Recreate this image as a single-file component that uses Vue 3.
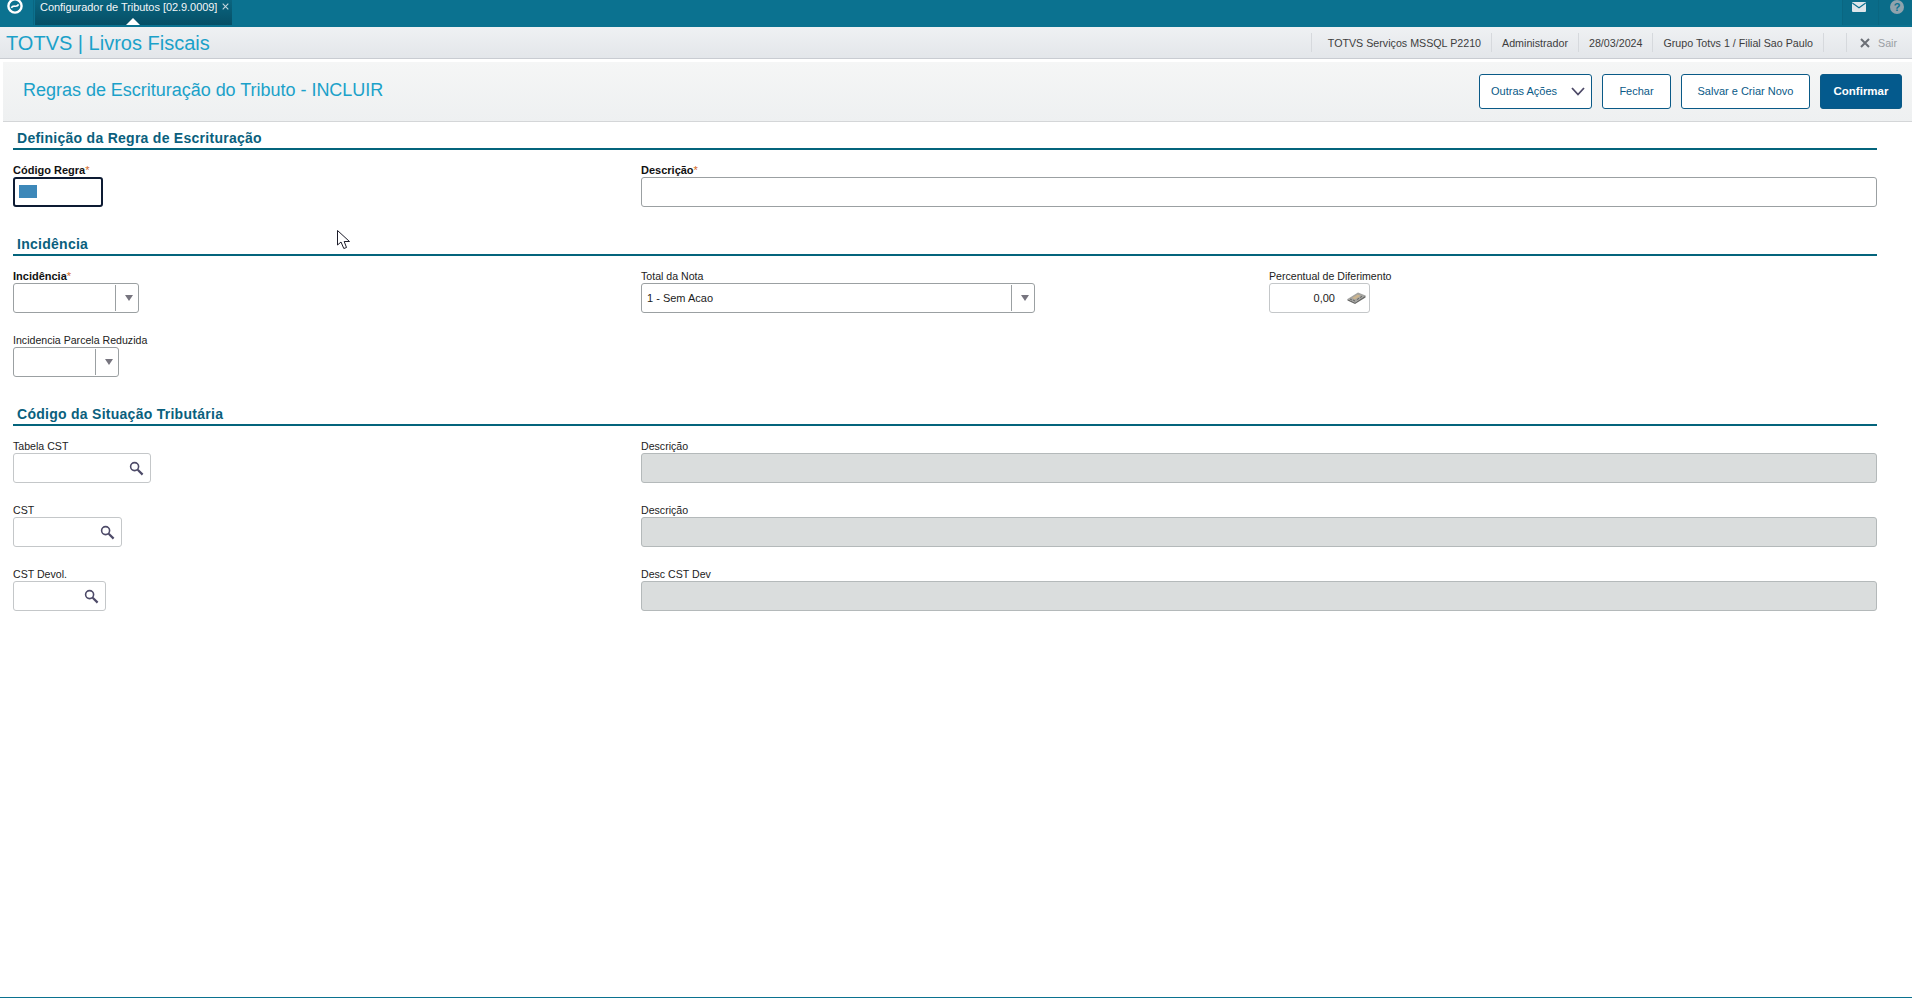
<script setup>
const info = ['TOTVS Serviços MSSQL P2210', 'Administrador', '28/03/2024', 'Grupo Totvs 1 / Filial Sao Paulo']
const cstRows = [
  { label: 'Tabela CST', width: 138, desc: 'Descrição' },
  { label: 'CST', width: 109, desc: 'Descrição' },
  { label: 'CST Devol.', width: 93, desc: 'Desc CST Dev' },
]
</script>

<template>
  <div class="app">
    <header class="topbar">
      <div class="logo-cell">
        <svg width="16" height="16" viewBox="0 0 16 16">
          <circle cx="8" cy="8" r="6.6" fill="none" stroke="#fff" stroke-width="2.4" />
          <path d="M4.4 9.8 C6 6.2 10 10.4 11.6 6.4" fill="none" stroke="#fff" stroke-width="1.7" />
        </svg>
      </div>
      <div class="tab">
        <span class="tab-title">Configurador de Tributos [02.9.0009]</span>
        <svg class="tab-x" width="7" height="7" viewBox="0 0 7 7">
          <path d="M0.7 0.7 L6.3 6.3 M6.3 0.7 L0.7 6.3" stroke="#c5d6dd" stroke-width="1.1" />
        </svg>
        <i class="tab-caret"></i>
      </div>
      <div class="top-icons">
        <div class="top-icon mail">
          <svg width="14" height="10" viewBox="0 0 14 10">
            <rect width="14" height="10" rx="1" fill="#dfe6ea" />
            <path d="M0.3 1 L7 5.8 L13.7 1" fill="none" stroke="#0b7290" stroke-width="1.1" />
          </svg>
        </div>
        <div class="top-icon help">
          <svg width="14" height="14" viewBox="0 0 14 14">
            <circle cx="7" cy="7" r="7" fill="#8fa3ad" />
            <text x="7" y="11" text-anchor="middle" class="help-mark">?</text>
          </svg>
        </div>
      </div>
    </header>

    <div class="subbar">
      <div class="brand">TOTVS | Livros Fiscais</div>
      <div class="info">
        <span v-for="item in info" :key="item" class="info-item">{{ item }}</span>
      </div>
      <div class="exit">
        <svg width="10" height="10" viewBox="0 0 10 10">
          <path d="M1 1 L9 9 M9 1 L1 9" stroke="#6b6f76" stroke-width="2" />
        </svg>
        <span>Sair</span>
      </div>
    </div>

    <div class="page-head">
      <h1>Regras de Escrituração do Tributo - INCLUIR</h1>
      <div class="actions">
        <button class="btn btn-more">
          <span>Outras Ações</span>
          <svg width="14" height="9" viewBox="0 0 14 9">
            <path d="M1 1 L7 7.5 L13 1" fill="none" stroke="#4d4a68" stroke-width="1.8" />
          </svg>
        </button>
        <button class="btn btn-close">Fechar</button>
        <button class="btn btn-save">Salvar e Criar Novo</button>
        <button class="btn btn-primary">Confirmar</button>
      </div>
    </div>

    <main class="form">
      <section class="section sec-def">
        <h2>Definição da Regra de Escrituração</h2>
        <div class="grid">
          <div class="field">
            <label class="req">Código Regra<em>*</em></label>
            <div class="input focus code-input"><i class="caret-block"></i></div>
          </div>
          <div class="field span2">
            <label class="req">Descrição<em>*</em></label>
            <div class="input"></div>
          </div>
        </div>
      </section>

      <section class="section sec-inc">
        <h2>Incidência</h2>
        <div class="grid">
          <div class="field">
            <label class="req">Incidência<em>*</em></label>
            <div class="input select w-inc">
              <span class="select-arrow"></span>
            </div>
          </div>
          <div class="field">
            <label>Total da Nota</label>
            <div class="input select w-total">
              <span class="value">1 - Sem Acao</span>
              <span class="select-arrow"></span>
            </div>
          </div>
          <div class="field">
            <label>Percentual de Diferimento</label>
            <div class="input light number w-perc">
              <span class="value">0,00</span>
              <svg width="19" height="12" viewBox="0 0 19 12">
                <path d="M0.5 7 L11 0.5 L18.5 3.5 L8 10.5 Z" fill="#a3a3a0" />
                <path d="M0.5 7 L8 10.5 L18.5 3.5 L18.5 5.5 L8 12 L0.5 8.6 Z" fill="#6a6a68" />
                <path d="M5 6 L10.6 2.6 L13.6 3.8 L8 7.5 Z" fill="#cbb48f" />
                <path d="M3 7 L5 8 M6 8 L8 9 M10 7.6 L12 6.3 M13 5.6 L15 4.3" stroke="#5a5a58" stroke-width="0.8" />
              </svg>
            </div>
          </div>
          <div class="field">
            <label>Incidencia Parcela Reduzida</label>
            <div class="input select w-parc">
              <span class="select-arrow"></span>
            </div>
          </div>
        </div>
      </section>

      <section class="section sec-cst">
        <h2>Código da Situação Tributária</h2>
        <div class="grid">
          <template v-for="row in cstRows" :key="row.label">
            <div class="field">
              <label>{{ row.label }}</label>
              <div class="input light lookup" :style="{ width: row.width + 'px' }">
                <svg width="15" height="15" viewBox="0 0 15 15">
                  <circle cx="5.6" cy="5.6" r="4" fill="none" stroke="#4d4a68" stroke-width="1.6" />
                  <path d="M8.7 8.7 L13.6 13.6" stroke="#4d4a68" stroke-width="2.2" />
                </svg>
              </div>
            </div>
            <div class="field span2">
              <label>{{ row.desc }}</label>
              <div class="input disabled"></div>
            </div>
          </template>
        </div>
      </section>
    </main>

    <svg class="cursor" width="15" height="21" viewBox="0 0 15 21">
      <path d="M1.5 1.5 L1.5 16 L5 13 L7.8 19.5 L10.5 18.5 L8.2 12.5 L13.5 12.5 Z" fill="#fff" stroke="#1c1c2a" stroke-width="1" />
    </svg>
  </div>
</template>

<style>
html, body { margin: 0; overflow: hidden; background: #fff; }
</style>

<style scoped>
.app {
  position: relative;
  width: 1912px;
  height: 998px;
  box-sizing: border-box;
  display: flex;
  flex-direction: column;
  overflow: hidden;
  background: #fff;
  border-bottom: 1px solid #0b7290;
  font-family: "Liberation Sans", Arial, sans-serif;
  font-size: 11px;
  color: #1c1c1c;
}
.topbar {
  flex: 0 0 27px;
  display: flex;
  background: #0b7290;
}
.logo-cell {
  width: 34px;
  height: 25px;
  box-sizing: border-box;
  padding-left: 7px;
  border-right: 1px solid #0a6681;
  overflow: hidden;
}
.logo-cell svg { display: block; margin-top: -2px; }
.tab {
  position: relative;
  width: 197px;
  height: 25px;
  margin-left: 1px;
  box-sizing: border-box;
  padding: 1px 0 0 5px;
  display: flex;
  line-height: 13px;
  color: #f2f6f8;
  background: linear-gradient(#0a6580, #064f66);
}
.tab-title { white-space: nowrap; letter-spacing: -0.05px; }
.tab-x { position: absolute; left: 187px; top: 3px; }
.tab-caret {
  position: absolute;
  left: 91px;
  bottom: 0;
  border: 7px solid transparent;
  border-top: 0;
  border-bottom-color: #fff;
}
.top-icons { margin-left: auto; display: flex; }
.top-icon {
  height: 25px;
  box-sizing: border-box;
  border-left: 1px solid #0a6681;
  background: #0a6c89;
  overflow: hidden;
}
.top-icon svg { display: block; }
.mail { width: 36px; padding: 2px 0 0 9px; }
.help { width: 34px; padding: 0 0 0 11px; }
.help-mark { font: bold 11px "Liberation Sans", sans-serif; fill: #0b7290; }

.subbar {
  flex: 0 0 32px;
  box-sizing: border-box;
  display: flex;
  align-items: center;
  padding-left: 6px;
  background: linear-gradient(#eff1f3, #e3e6ea);
  border-bottom: 1px solid #c9ccd2;
  margin-bottom: 3px;
}
.brand { font-size: 20px; line-height: 23px; padding-top: 1px; color: #1ba1c9; }
.info {
  margin-left: auto;
  display: flex;
  height: 19px;
  align-items: stretch;
  border-left: 1px solid #d6d9dd;
}
.info-item {
  display: flex;
  align-items: center;
  padding: 0 10px;
  border-right: 1px solid #d6d9dd;
  color: #3d3d3d;
  font-size: 10.7px;
  white-space: nowrap;
}
.info-item:first-child { padding-left: 16px; }
.exit {
  margin-left: 22px;
  width: 66px;
  height: 19px;
  box-sizing: border-box;
  border-left: 1px solid #d6d9dd;
  display: flex;
  align-items: center;
  gap: 8px;
  padding-left: 13px;
  color: #9a9ea3;
  font-size: 10.7px;
}

.page-head {
  flex: 0 0 60px;
  margin-left: 3px;
  box-sizing: border-box;
  display: flex;
  align-items: center;
  padding: 0 10px 0 20px;
  background: linear-gradient(#f5f6f6, #eef0f1);
  border-bottom: 1px solid #d4d6d8;
}
h1 {
  margin: 0 0 2px;
  font-size: 18px;
  font-weight: 400;
  letter-spacing: -0.02px;
  color: #1ba1c9;
}
.actions { margin-left: auto; display: flex; gap: 10px; }
.btn {
  height: 35px;
  box-sizing: border-box;
  border: 1px solid #0a5a87;
  border-radius: 3px;
  background: #fff;
  color: #0a5a87;
  font: 11px/13px "Liberation Sans", Arial, sans-serif;
  padding: 0 0 1px;
}
.btn-more {
  width: 113px;
  display: flex;
  align-items: center;
  justify-content: space-between;
  padding: 0 6px 1px 11px;
}
.btn-close { width: 69px; }
.btn-save { width: 129px; }
.btn-primary {
  width: 82px;
  background: #045a8d;
  color: #fff;
  font-size: 11.5px;
  font-weight: 700;
}

.form {
  flex: 1;
  display: flex;
  flex-direction: column;
  padding: 0 35px 0 13px;
}
h2 {
  margin: 0;
  height: 28px;
  box-sizing: border-box;
  padding: 8px 0 0 4px;
  border-bottom: 2px solid #04647c;
  font-size: 14px;
  line-height: 17px;
  letter-spacing: 0.27px;
  font-weight: 700;
  color: #0a5f7d;
}
.grid {
  display: grid;
  grid-template-columns: 628px 628px 1fr;
  padding: 12px 0 21px;
  row-gap: 19px;
}
.span2 { grid-column: 2 / 4; }
.field { display: flex; flex-direction: column; }
.field label {
  height: 15px;
  line-height: 16px;
  font-size: 10.6px;
  white-space: nowrap;
  color: #222;
}
.field label.req { font-size: 11px; font-weight: 700; color: #111; }
.req em { color: #d4691e; font-style: normal; font-weight: 400; }
.input {
  height: 30px;
  box-sizing: border-box;
  border: 1px solid #9ba0a2;
  border-radius: 3px;
  background: #fff;
  display: flex;
  align-items: center;
}
.light { border-color: #c4c7c9; }
.code-input { width: 90px; }
.w-inc { width: 126px; }
.w-total { width: 394px; }
.w-perc { width: 101px; }
.w-parc { width: 106px; }
.focus {
  border: 2px solid #0d1b33;
  padding-left: 4px;
}
.caret-block {
  display: block;
  width: 18px;
  height: 13px;
  margin-bottom: 1px;
  background: #3d88b9;
}
.value { padding-left: 5px; font-size: 11px; }
.select { justify-content: space-between; }
.select-arrow {
  margin-left: auto;
  width: 23px;
  height: 26px;
  box-sizing: border-box;
  padding-right: 5px;
  border-left: 1px solid #9ba0a2;
  display: flex;
  align-items: center;
  justify-content: flex-end;
}
.select-arrow::after {
  content: "";
  border: 4px solid transparent;
  border-bottom: 0;
  border-top: 6px solid #77757f;
}
.number { justify-content: flex-end; padding-right: 3px; gap: 12px; }
.number .value { padding: 0; }
.lookup { justify-content: flex-end; padding-right: 6px; }
.disabled { background: #dadddd; border-color: #b4b9ba; }

.cursor {
  position: absolute;
  left: 336px;
  top: 229px;
}
</style>
